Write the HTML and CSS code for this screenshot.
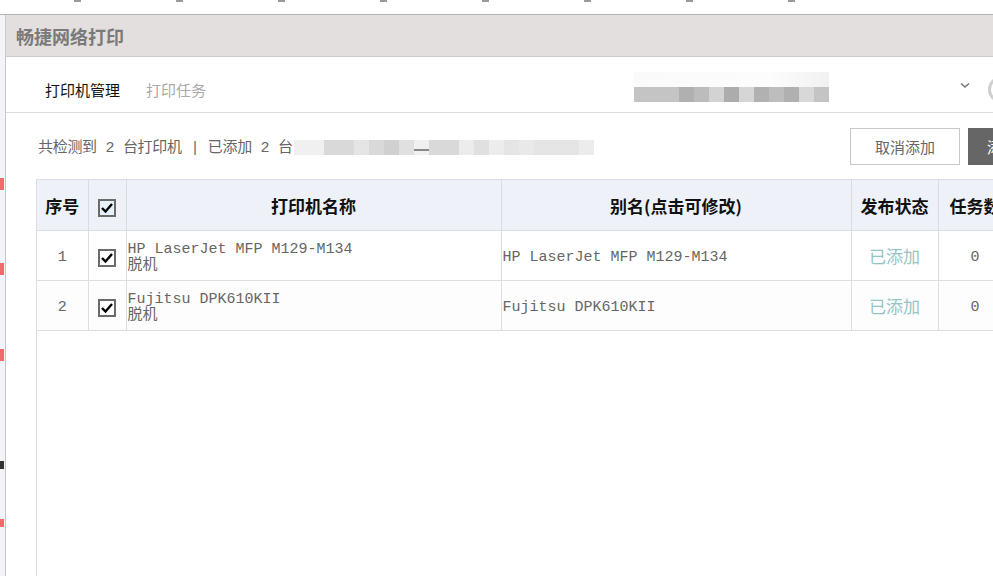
FILE: index.html
```html
<!DOCTYPE html>
<html lang="zh-CN">
<head>
    <meta charset="UTF-8">
    <meta name="viewport" content="width=device-width, initial-scale=1.0">
    <title>畅捷网络打印</title>
    <link rel="stylesheet" href="styles.css">
</head>
<body>
    <div class="page-strip">
        <span></span><span></span><span></span><span></span>
        <span></span><span></span><span></span><span></span>
    </div>

    <div class="main">
        <div class="behind">
            <span class="bit red b1"></span>
            <span class="bit red b2"></span>
            <span class="bit red b3"></span>
            <span class="bit dark b4"></span>
            <span class="bit red b5"></span>
        </div>

        <div class="dialog">
            <div class="dialog-head">畅捷网络打印</div>

            <div class="tabs">
                <span class="tab active">打印机管理</span>
                <span class="tab">打印任务</span>
                <div class="user-area">
                    <div class="blur blur-user">
                        <div class="blur-top"></div>
                        <div class="blur-row">
                            <i class="w3 g1"></i><i class="g2"></i><i class="g3"></i><i class="g4"></i>
                            <i class="g5"></i><i class="g6"></i><i class="g7"></i><i class="g8"></i>
                            <i class="g2"></i><i class="g9"></i><i class="g1"></i>
                        </div>
                    </div>
                    <svg class="chevron" width="10" height="7" viewBox="0 0 10 7">
                        <path d="M1 1.5 L5 5 L9 1.5" fill="none" stroke="#777" stroke-width="1.6"/>
                    </svg>
                    <span class="avatar"></span>
                </div>
            </div>

            <div class="toolbar">
                <span class="summary">共检测到 2 台打印机 | 已添加 2 台</span>
                <div class="blur blur-info">
                    <i class="w2 l1"></i><i class="w2 l2"></i><i class="l3"></i><i class="l2"></i>
                    <i class="l4"></i><i class="l5"></i><i class="l1 mark"></i><i class="l2"></i>
                    <i class="l2"></i><i class="l6"></i><i class="l5"></i><i class="l6"></i>
                    <i class="l3"></i><i class="l7"></i><i class="w3 l3"></i><i class="l6"></i>
                </div>
                <div class="actions">
                    <button class="btn btn-light">取消添加</button>
                    <button class="btn btn-dark">添加</button>
                </div>
            </div>

            <div class="table-wrap">
                <table class="printers">
                    <colgroup>
                        <col class="c-no"><col class="c-check"><col class="c-name">
                        <col class="c-alias"><col class="c-state"><col class="c-jobs">
                    </colgroup>
                    <thead>
                        <tr>
                            <th>序号</th>
                            <th><span class="checkbox head-check"><svg width="12" height="10" viewBox="0 0 12 10"><path d="M1 5 L4.5 8.5 L11 1" fill="none" stroke="#000" stroke-width="2.4"/></svg></span></th>
                            <th>打印机名称</th>
                            <th>别名(点击可修改)</th>
                            <th>发布状态</th>
                            <th>任务数</th>
                        </tr>
                    </thead>
                    <tbody>
                        <tr>
                            <td class="num">1</td>
                            <td class="check-cell"><span class="checkbox"><svg width="12" height="10" viewBox="0 0 12 10"><path d="M1 5 L4.5 8.5 L11 1" fill="none" stroke="#000" stroke-width="2.4"/></svg></span></td>
                            <td class="name">HP LaserJet MFP M129-M134<br>脱机</td>
                            <td class="alias">HP LaserJet MFP M129-M134</td>
                            <td class="state">已添加</td>
                            <td class="num">0</td>
                        </tr>
                        <tr class="alt">
                            <td class="num">2</td>
                            <td class="check-cell"><span class="checkbox"><svg width="12" height="10" viewBox="0 0 12 10"><path d="M1 5 L4.5 8.5 L11 1" fill="none" stroke="#000" stroke-width="2.4"/></svg></span></td>
                            <td class="name">Fujitsu DPK610KII<br>脱机</td>
                            <td class="alias">Fujitsu DPK610KII</td>
                            <td class="state">已添加</td>
                            <td class="num">0</td>
                        </tr>
                    </tbody>
                </table>
            </div>
        </div>
    </div>
</body>
</html>
```

FILE: styles.css
```css
:root {
    --line: #dddddd;
    --head-bg: #e3dfde;
    --table-head: #eef1f8;
    --muted: #666666;
    --added: #93c5c6;
}

* {
    box-sizing: border-box;
    margin: 0;
    padding: 0;
}

html, body {
    height: 100%;
}

body {
    font-family: "Noto Sans CJK SC", "Liberation Sans", sans-serif;
    background: #ffffff;
    color: #222;
    overflow: hidden;
    display: flex;
    flex-direction: column;
}

/* page behind the dialog */
.page-strip {
    height: 15px;
    flex-shrink: 0;
    border-bottom: 1px solid #b4b4b4;
    display: flex;
    align-items: flex-start;
    padding-left: 74px;
    gap: 95px;
}

.page-strip span {
    width: 7px;
    height: 2px;
    background: #9a9a9a;
}

.main {
    flex: 1;
    display: flex;
    min-height: 0;
}

.behind {
    width: 5px;
    flex-shrink: 0;
    background: #f3f4f7;
    display: flex;
    flex-direction: column;
}

.bit {
    width: 4px;
    height: 12px;
}

.red { background: #f26a6a; }
.dark { background: #333; height: 8px; }

.b1 { margin-top: 163px; }
.b2 { margin-top: 73px; }
.b3 { margin-top: 74px; }
.b4 { margin-top: 100px; }
.b5 { margin-top: 50px; height: 8px; }

/* dialog */
.dialog {
    width: 1082px;
    flex-shrink: 0;
    border-left: 1px solid #c8c8c8;
    display: flex;
    flex-direction: column;
}

.dialog-head {
    height: 42px;
    background: var(--head-bg);
    border-bottom: 1px solid #cccccc;
    padding-left: 10px;
    display: flex;
    align-items: center;
    font-size: 18px;
    font-weight: 700;
    color: #7a7a7a;
}

.tabs {
    height: 56px;
    border-bottom: 1px solid var(--line);
    display: flex;
    align-items: center;
    padding-top: 10px;
    padding-left: 39px;
    padding-right: 72px;
    font-size: 15px;
}

.tab {
    color: #aaaaaa;
    margin-right: 26px;
}

.tab.active {
    color: #111;
}

.user-area {
    margin-left: auto;
    display: flex;
    align-items: center;
}

.blur {
    display: flex;
}

.blur i {
    display: block;
    width: 15px;
    height: 15px;
}

.blur i.w2 { width: 30px; }
.blur i.w3 { width: 45px; }

.blur-user {
    flex-direction: column;
    margin-top: -5px;
}

.blur-top {
    height: 15px;
    background: linear-gradient(90deg, #fafafa, #fcfcfc 70%, #f1f1f1);
}

.blur-row {
    display: flex;
}

.g1 { background: #c4c4c4; }
.g2 { background: #b0b0b0; }
.g3 { background: #bcbcbc; }
.g4 { background: #d3d3d3; }
.g5 { background: #acacac; }
.g6 { background: #d6d6d6; }
.g7 { background: #b1b1b1; }
.g8 { background: #bdbdbd; }
.g9 { background: #d8d8d8; }

.chevron {
    margin-left: 131px;
    margin-top: -8px;
}

.avatar {
    width: 27px;
    height: 27px;
    border-radius: 50%;
    border: 3px solid #cfcfcf;
    margin-left: 18px;
    flex-shrink: 0;
}

.toolbar {
    height: 66px;
    display: flex;
    align-items: center;
    padding-left: 32px;
    padding-right: 19px;
}

.summary {
    font-family: "Liberation Mono", "Noto Sans CJK SC", monospace;
    font-size: 15px;
    letter-spacing: -0.3px;
    color: var(--muted);
    white-space: pre;
}

.blur-info {
    margin-left: 1px;
    margin-top: 2px;
}

.l1 { background: #f0f0f0; }
.l2 { background: #d9d9d9; }
.l3 { background: #e5e5e5; }
.l4 { background: #d0d0d0; }
.l5 { background: #e0e0e0; }
.l6 { background: #ececec; }
.l7 { background: #e9e9e9; }

.blur i.mark {
    background: linear-gradient(#f0f0f0 60%, #888 60%, #888 70%, #f0f0f0 70%);
}

.actions {
    margin-left: auto;
    display: flex;
    gap: 8px;
}

.btn {
    height: 37px;
    font-family: inherit;
    font-size: 15px;
    border-radius: 0;
    cursor: pointer;
}

.btn-light {
    width: 110px;
    background: #fff;
    border: 1px solid #c8c8c8;
    color: var(--muted);
}

.btn-dark {
    width: 100px;
    background: #666;
    border: 1px solid #666;
    color: #fff;
    text-align: left;
    padding-left: 18px;
}

/* table */
.table-wrap {
    flex: 1;
    margin-left: 30px;
    border-left: 1px solid var(--line);
}

.printers {
    border-collapse: collapse;
    table-layout: fixed;
    width: 975px;
}

.c-no { width: 51px; }
.c-check { width: 38px; }
.c-name { width: 375px; }
.c-alias { width: 350px; }
.c-state { width: 87px; }
.c-jobs { width: 74px; }

.printers th,
.printers td {
    border: 1px solid var(--line);
    height: 50px;
    padding: 0;
}

.printers th:first-child,
.printers td:first-child {
    border-left: none;
}

.printers th {
    background: var(--table-head);
    border-color: #d8dce4;
    font-size: 17px;
    font-weight: 700;
    color: #111;
    text-align: center;
    height: 51px;
}

.printers tr.alt td {
    background: #fdfdfd;
}

.checkbox {
    width: 18px;
    height: 18px;
    border: 2px solid #6b6b6b;
    background: #fff;
    display: inline-flex;
    align-items: center;
    justify-content: center;
    vertical-align: middle;
}

.head-check {
    background: #e6f1fb;
}

.check-cell {
    text-align: center;
}

.printers td.num {
    text-align: center;
    font-family: "Liberation Mono", monospace;
    font-size: 15px;
    color: var(--muted);
    padding-top: 4px;
}

.printers td.name,
.printers td.alias {
    font-family: "Liberation Mono", "Noto Sans CJK SC", monospace;
    font-size: 15px;
    line-height: 16px;
    color: var(--muted);
    padding-left: 1px;
    padding-top: 5px;
    white-space: nowrap;
}

.state {
    text-align: center;
    font-size: 17px;
    color: var(--added);
}
```
